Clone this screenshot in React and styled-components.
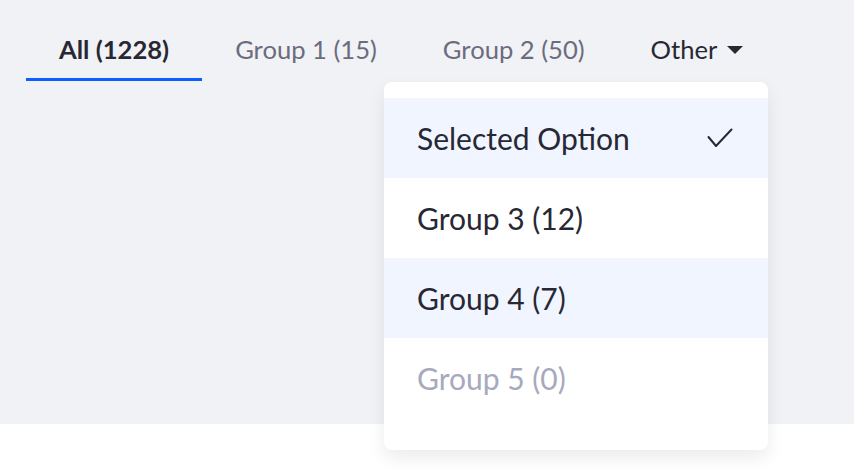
import React from "react";
import styled, { createGlobalStyle } from "styled-components";

const Global = createGlobalStyle`
  html, body { margin: 0; padding: 0; background: #ffffff; }
  body { font-family: Lato, "Noto Sans", sans-serif; }
`;

const Page = styled.div`
  width: 854px;
  height: 470px;
  background: #ffffff;
  overflow: hidden;
`;

const Surface = styled.div`
  position: relative;
  height: 424px;
  background: #f1f2f5;
  padding: 20px 0 0 26px;
  box-sizing: border-box;
`;

const Tabs = styled.nav`
  display: flex;
  align-items: stretch;
`;

const Tab = styled.div`
  display: flex;
  align-items: center;
  gap: 10px;
  height: 61px;
  padding: 0 33px;
  box-sizing: border-box;
  font-size: 25.6px;
  font-weight: ${(p) => (p.$active ? 700 : 400)};
  color: ${(p) => (p.$active || p.$open ? "#272833" : "#6b6c7e")};
  border-bottom: 3px solid ${(p) => (p.$active ? "#0b5fff" : "transparent")};
  white-space: nowrap;
`;

const Caret = styled.svg`
  width: 16px;
  height: 8px;
  display: block;
  margin-top: 1px;
`;

const Menu = styled.ul`
  position: absolute;
  left: 384px;
  top: 82px;
  width: 384px;
  margin: 0;
  padding: 16px 0 32px;
  list-style: none;
  background: #ffffff;
  border-radius: 8px;
  box-shadow: 0 8px 18px rgba(0, 0, 0, 0.08);
`;

const Item = styled.li`
  display: flex;
  align-items: center;
  justify-content: space-between;
  height: 80px;
  padding: 0 35px 0 33px;
  box-sizing: border-box;
  font-size: 30px;
  color: ${(p) => (p.$disabled ? "#a7a9bc" : "#272833")};
  background: ${(p) => (p.$highlight ? "#f0f5ff" : "transparent")};
`;

const Check = styled.svg`
  width: 26px;
  height: 20px;
  display: block;
`;

export default function App() {
  return (
    <Page>
      <Global />
      <Surface>
        <Tabs>
          <Tab $active>All (1228)</Tab>
          <Tab>Group 1 (15)</Tab>
          <Tab>Group 2 (50)</Tab>
          <Tab $open>
            Other
            <Caret viewBox="0 0 16 8">
              <path d="M0 0 H16 L8 8 Z" fill="#272833" />
            </Caret>
          </Tab>
        </Tabs>
        <Menu>
          <Item $highlight>
            Selected Option
            <Check viewBox="0 0 26 20">
              <path
                d="M1.5 9 L9 18 L24.5 1.5"
                fill="none"
                stroke="#272833"
                strokeWidth="2"
                strokeLinecap="round"
                strokeLinejoin="round"
              />
            </Check>
          </Item>
          <Item>Group 3 (12)</Item>
          <Item $highlight>Group 4 (7)</Item>
          <Item $disabled>Group 5 (0)</Item>
        </Menu>
      </Surface>
    </Page>
  );
}
